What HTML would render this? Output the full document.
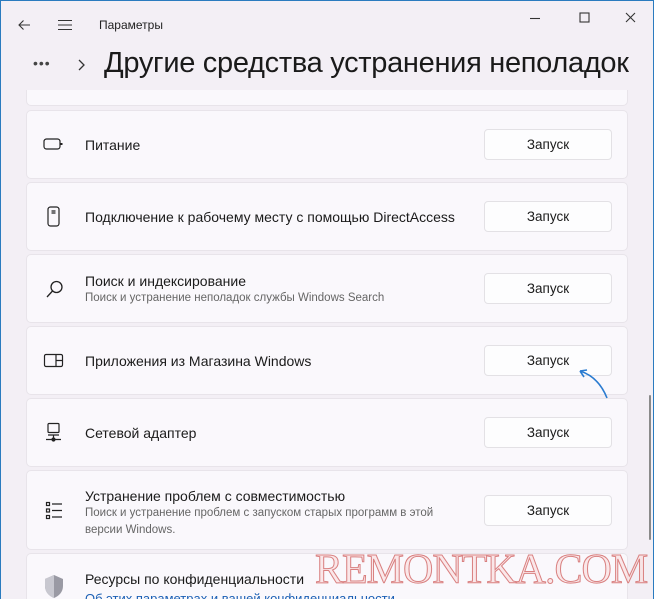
<!DOCTYPE html>
<html style="overflow:hidden;width:654px;height:599px"><head><meta charset="utf-8"><style>
*{margin:0;padding:0;box-sizing:border-box}
body{width:654px;height:599px;overflow:hidden;background:#f3eff5;font-family:"Liberation Sans","DejaVu Sans",sans-serif;color:#1b1b1b;position:relative}
.frame{position:absolute;inset:0;border:1px solid #2a7bbf;border-bottom:none;z-index:5;pointer-events:none}
.t{position:absolute;font-size:12px;left:99px;top:18px;color:#222}
.title{position:absolute;left:104px;top:47px;font-size:29px;color:#1a1a1a;letter-spacing:-0.3px;white-space:nowrap}
.card{position:absolute;left:26px;width:602px;background:#faf8fc;border:1px solid #e8e4ea;border-radius:5px;overflow:hidden}
.name{position:absolute;left:58px;font-size:14px;color:#1b1b1b;white-space:nowrap}
.sub{position:absolute;left:58px;font-size:11.5px;color:#666;line-height:17px}
.btn{position:absolute;left:457px;width:128px;height:31px;background:#fdfdfe;border:1px solid #e3e1e5;border-radius:4px;font-size:13.5px;text-align:center;line-height:29px}
.ic{position:absolute;left:16px}
</style></head><body>
<div class="frame"></div>
<svg style="position:absolute;left:16px;top:17px" width="16" height="16" fill="none" stroke="#333" stroke-width="1.1"><path d="M14 8H3M7.5 3.5L3 8l4.5 4.5"/></svg>
<svg style="position:absolute;left:57px;top:17px" width="16" height="16" stroke="#333" stroke-width="1.1"><path d="M1 3.5h14M1 8h14M1 12.5h14"/></svg>
<div class="t">Параметры</div>
<svg style="position:absolute;left:526px;top:10px" width="120" height="16" stroke="#333" stroke-width="1.1" fill="none"><path d="M4 8.5h10"/><rect x="54" y="3" width="9" height="9"/><path d="M100 3l9 9M109 3l-9 9"/></svg>
<div style="position:absolute;left:33px;top:55px;font-size:14px;letter-spacing:1px;color:#444">•••</div>
<svg style="position:absolute;left:76px;top:58px" width="10" height="14" fill="none" stroke="#333" stroke-width="1.3"><path d="M3 2l5 5-5 5"/></svg>
<div class="title">Другие средства устранения неполадок</div>

<div class="card" style="top:90px;height:16px;border-top:none;border-radius:0 0 5px 5px"></div>

<div class="card" style="top:110px;height:69px">
<svg class="ic" style="top:26px" width="22" height="16" fill="none" stroke="#222" stroke-width="1.2"><rect x="1" y="2" width="16" height="10" rx="2.5"/><path d="M18.5 6v2" stroke-width="2"/></svg>
<div class="name" style="top:26px">Питание</div><div class="btn" style="top:18px">Запуск</div></div>

<div class="card" style="top:182px;height:69px">
<svg class="ic" style="top:23px;left:20px" width="14" height="22" fill="none" stroke="#222" stroke-width="1.2"><rect x="1" y="1" width="11" height="19" rx="2.5"/><path d="M4.5 5h4M4.5 7h4"/></svg>
<div class="name" style="top:26px">Подключение к рабочему месту с помощью DirectAccess</div><div class="btn" style="top:18px">Запуск</div></div>

<div class="card" style="top:254px;height:69px">
<svg class="ic" style="top:24px;left:18px" width="20" height="20" fill="none" stroke="#222" stroke-width="1.3"><circle cx="11.5" cy="8" r="5.5"/><path d="M7.5 12L2 18"/></svg>
<div class="name" style="top:18px">Поиск и индексирование</div><div class="sub" style="top:35px">Поиск и устранение неполадок службы Windows Search</div><div class="btn" style="top:18px">Запуск</div></div>

<div class="card" style="top:326px;height:69px">
<svg class="ic" style="top:26px" width="22" height="16" fill="none" stroke="#222" stroke-width="1.2"><rect x="1.5" y="1.5" width="18" height="12" rx="1.5"/><path d="M13 1.5v12M13 7.5h6.5"/></svg>
<div class="name" style="top:26px">Приложения из Магазина Windows</div><div class="btn" style="top:18px">Запуск</div></div>

<div class="card" style="top:398px;height:69px">
<svg class="ic" style="top:23px" width="22" height="22" fill="none" stroke="#222" stroke-width="1.2"><rect x="5" y="1.5" width="11" height="9" rx="1"/><path d="M5 13h11M10.5 13v4M3 17.5h15"/><circle cx="10.5" cy="17.5" r="1.5" fill="#222"/></svg>
<div class="name" style="top:26px">Сетевой адаптер</div><div class="btn" style="top:18px">Запуск</div></div>

<div class="card" style="top:470px;height:80px">
<svg class="ic" style="top:30px;left:18px" width="20" height="20" fill="none" stroke="#222" stroke-width="1.2"><rect x="1.5" y="1.5" width="3" height="3"/><rect x="1.5" y="8" width="3" height="3"/><rect x="1.5" y="14.5" width="3" height="3"/><path d="M7 3h10M7 9.5h10M7 16h10"/></svg>
<div class="name" style="top:17px">Устранение проблем с совместимостью</div><div class="sub" style="top:34px;width:400px">Поиск и устранение проблем с запуском старых программ в этой<br>версии Windows.</div><div class="btn" style="top:24px">Запуск</div></div>

<div class="card" style="top:553px;height:46px;border-bottom:none;border-radius:5px 5px 0 0">
<svg class="ic" style="top:20px" width="22" height="26"><path d="M11 1l9 4v7c0 6-4 10-9 12C6 22 2 18 2 12V5z" fill="#9a9aa4"/><path d="M11 1v23C6 22 2 18 2 12V5z" fill="#c8c8d0"/></svg>
<div class="name" style="top:17px">Ресурсы по конфиденциальности</div>
<div style="position:absolute;left:58px;top:37px;font-size:13px;color:#1a5fb4;white-space:nowrap">Об этих параметрах и вашей конфиденциальности</div></div>

<div style="position:absolute;left:649px;top:395px;width:2px;height:145px;background:#8a8a8a;border-radius:1px"></div>
<svg style="position:absolute;left:576px;top:365px" width="40" height="40" fill="none" stroke="#2a7bd0" stroke-width="1.6"><path d="M31 33C27 23 20 11 4 6"/><path d="M4 6l4 6M4 6l7-1"/></svg>
<div style="position:absolute;left:315px;top:546px;font-family:'Liberation Serif',serif;font-size:42px;color:rgba(250,220,220,0.6);-webkit-text-stroke:1px #d98080;letter-spacing:-1px;white-space:nowrap">REMONTKA.COM</div>
</body></html>
